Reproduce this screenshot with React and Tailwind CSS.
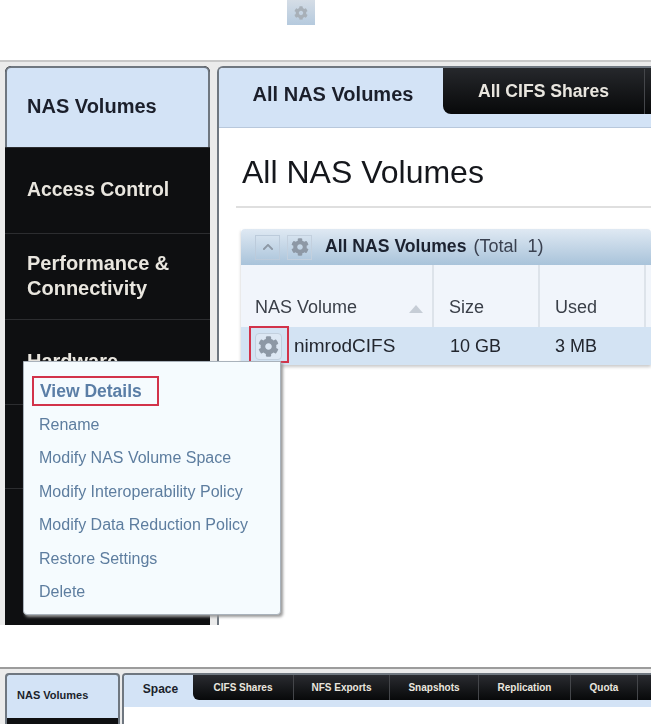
import { FaCog, FaChevronUp } from 'react-icons/fa';

const sideItems = [
  { label: 'Access Control', h: 'h-[86px]', size: 'text-[19.4px]' },
  { label: 'Performance & Connectivity', h: 'h-[86px]', size: 'text-[20px]' },
  { label: 'Hardware', h: 'h-[85px]', size: 'text-[20px]' },
  { label: '', h: 'h-[84px]', size: 'text-[20px]' },
  { label: '', h: 'flex-1', size: 'text-[20px]' },
];

const menuItems = ['Rename', 'Modify NAS Volume Space', 'Modify Interoperability Policy', 'Modify Data Reduction Policy', 'Restore Settings', 'Delete'];

const bottomTabs = [
  { label: 'CIFS Shares', w: 'w-[101px]' },
  { label: 'NFS Exports', w: 'w-[96px]' },
  { label: 'Snapshots', w: 'w-[89px]' },
  { label: 'Replication', w: 'w-[92px]' },
  { label: 'Quota', w: 'w-[67px]' },
];

function GearButton({ className, iconClass }) {
  return (
    <div className={`flex items-center justify-center border border-[#c3d0de] ${className}`}>
      <FaCog className={`text-[#8d98a5] ${iconClass}`} />
    </div>
  );
}

export default function App() {
  return (
    <div className="h-[724px] w-[651px] overflow-hidden bg-white font-['Liberation_Sans',Arial,sans-serif]">
      {/* loose gear icon above the first capture */}
      <div className="flex h-[60px] items-start pl-[287px]">
        <div className="flex h-[25px] w-[28px] items-center justify-center bg-gradient-to-b from-[#d5dde6] to-[#b5cade]">
          <FaCog className="size-[14px] text-[#a8b0b8]" />
        </div>
      </div>

      {/* first capture */}
      <div className="relative flex h-[565px] gap-[7px] border-t-2 border-[#c8c8c8] bg-[#ebebeb] pt-[4px] pl-[5px] blur-[0.3px]">
        <div className="flex h-full w-[205px] flex-col overflow-hidden rounded-t-md bg-[#0e0f11]">
          <div className="flex h-[81px] shrink-0 items-center rounded-t-md border-x-2 border-t-2 border-[#6f7780] bg-[#d3e3f6] pb-[4px] pl-[20px] text-[20px] font-bold text-[#1b1f2b]">
            NAS Volumes
          </div>
          {sideItems.map((item, i) => (
            <div key={i} className={`flex items-center border-t border-[#2c2d30] pr-6 pb-[2px] pl-[22px] leading-[25px] font-bold text-[#e9e6df] ${item.size} ${item.h}`}>
              {item.label}
            </div>
          ))}
        </div>

        <div className="flex h-full flex-1 flex-col overflow-hidden rounded-tl-md border-t-2 border-l-2 border-[#6f7780] bg-white">
          <div className="flex h-[59px] shrink-0 items-start bg-[#d3e3f6] shadow-[0_1px_0_#b8c8dc]">
            <div className="flex h-[52px] w-[224px] shrink-0 items-center justify-center pl-[4px] text-[20px] font-bold text-[#1b1f2b]">
              All NAS Volumes
            </div>
            <div className="flex h-[46px] flex-1 rounded-bl-lg bg-gradient-to-b from-[#26282c] to-[#08090a] pt-[1px] text-[17.6px] font-bold text-[#e9e6df]">
              <div className="flex w-[202px] items-center justify-center border-r border-[#44464a]">All CIFS Shares</div>
            </div>
          </div>

          <h1 className="mt-[25px] ml-[23px] text-[32px] leading-[40px] font-normal text-[#15171c]">All NAS Volumes</h1>
          <div className="mt-[14px] ml-[17px] h-[2px] bg-[#dfdfdf]"></div>

          <div className="mt-[21px] ml-[22px] flex h-[136px] flex-col shadow-[0_2px_3px_#c9c9c9]">
            <div className="flex h-[36px] items-center gap-[7px] rounded-t bg-gradient-to-b from-[#dfe9f3] to-[#a9c3da] pl-[14px] text-[17.6px] text-[#1c2230]">
              <div className="flex size-[25px] items-center justify-center border border-[#bccbdb]">
                <FaChevronUp className="size-[12px] text-[#8d98a5]" />
              </div>
              <GearButton className="size-[25px]" iconClass="size-[18px]" />
              <span className="mb-[2px] ml-[6px] font-bold">All NAS Volumes</span>
              <span className="mb-[2px] text-[18px] text-[#3a4150]">(Total&nbsp; 1)</span>
            </div>
            <div className="flex h-[62px] bg-[#f1f5fb] text-[18px] text-[#3a3f48]">
              <div className="flex w-[193px] items-end justify-between border-r-2 border-[#dde3ea] pr-[9px] pb-[6px] pl-[14px]">
                <span>NAS Volume</span>
                <span className="mb-[8px] size-0 border-x-[7px] border-b-[8px] border-x-transparent border-b-[#c6cdd6]"></span>
              </div>
              <div className="flex w-[106px] items-end border-r-2 border-[#dde3ea] pb-[6px] pl-[15px]">Size</div>
              <div className="flex w-[106px] items-end border-r-2 border-[#dde3ea] pb-[6px] pl-[15px]">Used</div>
            </div>
            <div className="flex h-[38px] items-center bg-[#d3e3f3] text-[18px] text-[#22262e]">
              <div className="flex w-[193px] items-center gap-[12px] pl-[14px]">
                <GearButton className="size-[27px] rounded-sm border-[#aebccd] bg-[#dde8f4]" iconClass="size-[21px]" />
                <span className="text-[19px]">nimrodCIFS</span>
              </div>
              <div className="w-[106px] pl-[16px]">10 GB</div>
              <div className="pl-[15px]">3 MB</div>
            </div>
          </div>
        </div>

        {/* red callout round the row action */}
        <div className="absolute top-[264px] left-[249px] h-[37px] w-[40px] border-2 border-[#d2334a]"></div>

        {/* row action menu */}
        <div className="absolute top-[299px] left-[23px] flex h-[254px] w-[258px] flex-col rounded-b border border-[#a9b2bb] bg-[#f5fbfe] pt-[13px] pl-[15px] text-[16px] text-[#5d7d9f] shadow-[2px_2px_3px_#9a9a9a]">
          <div className="relative flex h-[33px] items-center">
            <span className="ml-[1px] text-[17.5px] font-bold text-[#5a7ea6]">View Details</span>
            <div className="absolute top-[1px] -left-[7px] h-[30px] w-[127px] border-2 border-[#d2334a]"></div>
          </div>
          {menuItems.map((item) => (
            <div key={item} className="flex h-[33.5px] items-center">{item}</div>
          ))}
        </div>
      </div>

      <div className="h-[42px] bg-white"></div>

      {/* second capture */}
      <div className="flex h-[57px] gap-[2px] border-t-2 border-[#9c9c9c] bg-[#ebebeb] pt-[4px] pl-[5px]">
        <div className="flex h-full w-[115px] flex-col overflow-hidden rounded-t border-x-2 border-t-2 border-[#6f7780] bg-[#0e0f11]">
          <div className="flex h-[43px] items-center bg-[#d3e3f6] pb-[2px] pl-[10px] text-[11px] font-bold text-[#1b1f2b]">NAS Volumes</div>
        </div>
        <div className="flex h-full flex-1 flex-col overflow-hidden rounded-tl border-t-2 border-l-2 border-[#6f7780] bg-white">
          <div className="flex h-[32px] items-start bg-[#d3e3f6]">
            <div className="flex h-[27px] w-[69px] items-center justify-center pl-[4px] text-[12px] font-bold text-[#1b1f2b]">Space</div>
            <div className="flex h-[25px] flex-1 rounded-bl-md bg-gradient-to-b from-[#2a2c31] to-[#08090a] text-[10px] font-bold text-[#e9e6df]">
              {bottomTabs.map((tab) => (
                <div key={tab.label} className={`flex items-center justify-center border-r border-[#44464a] ${tab.w}`}>{tab.label}</div>
              ))}
            </div>
          </div>
        </div>
      </div>
    </div>
  );
}
